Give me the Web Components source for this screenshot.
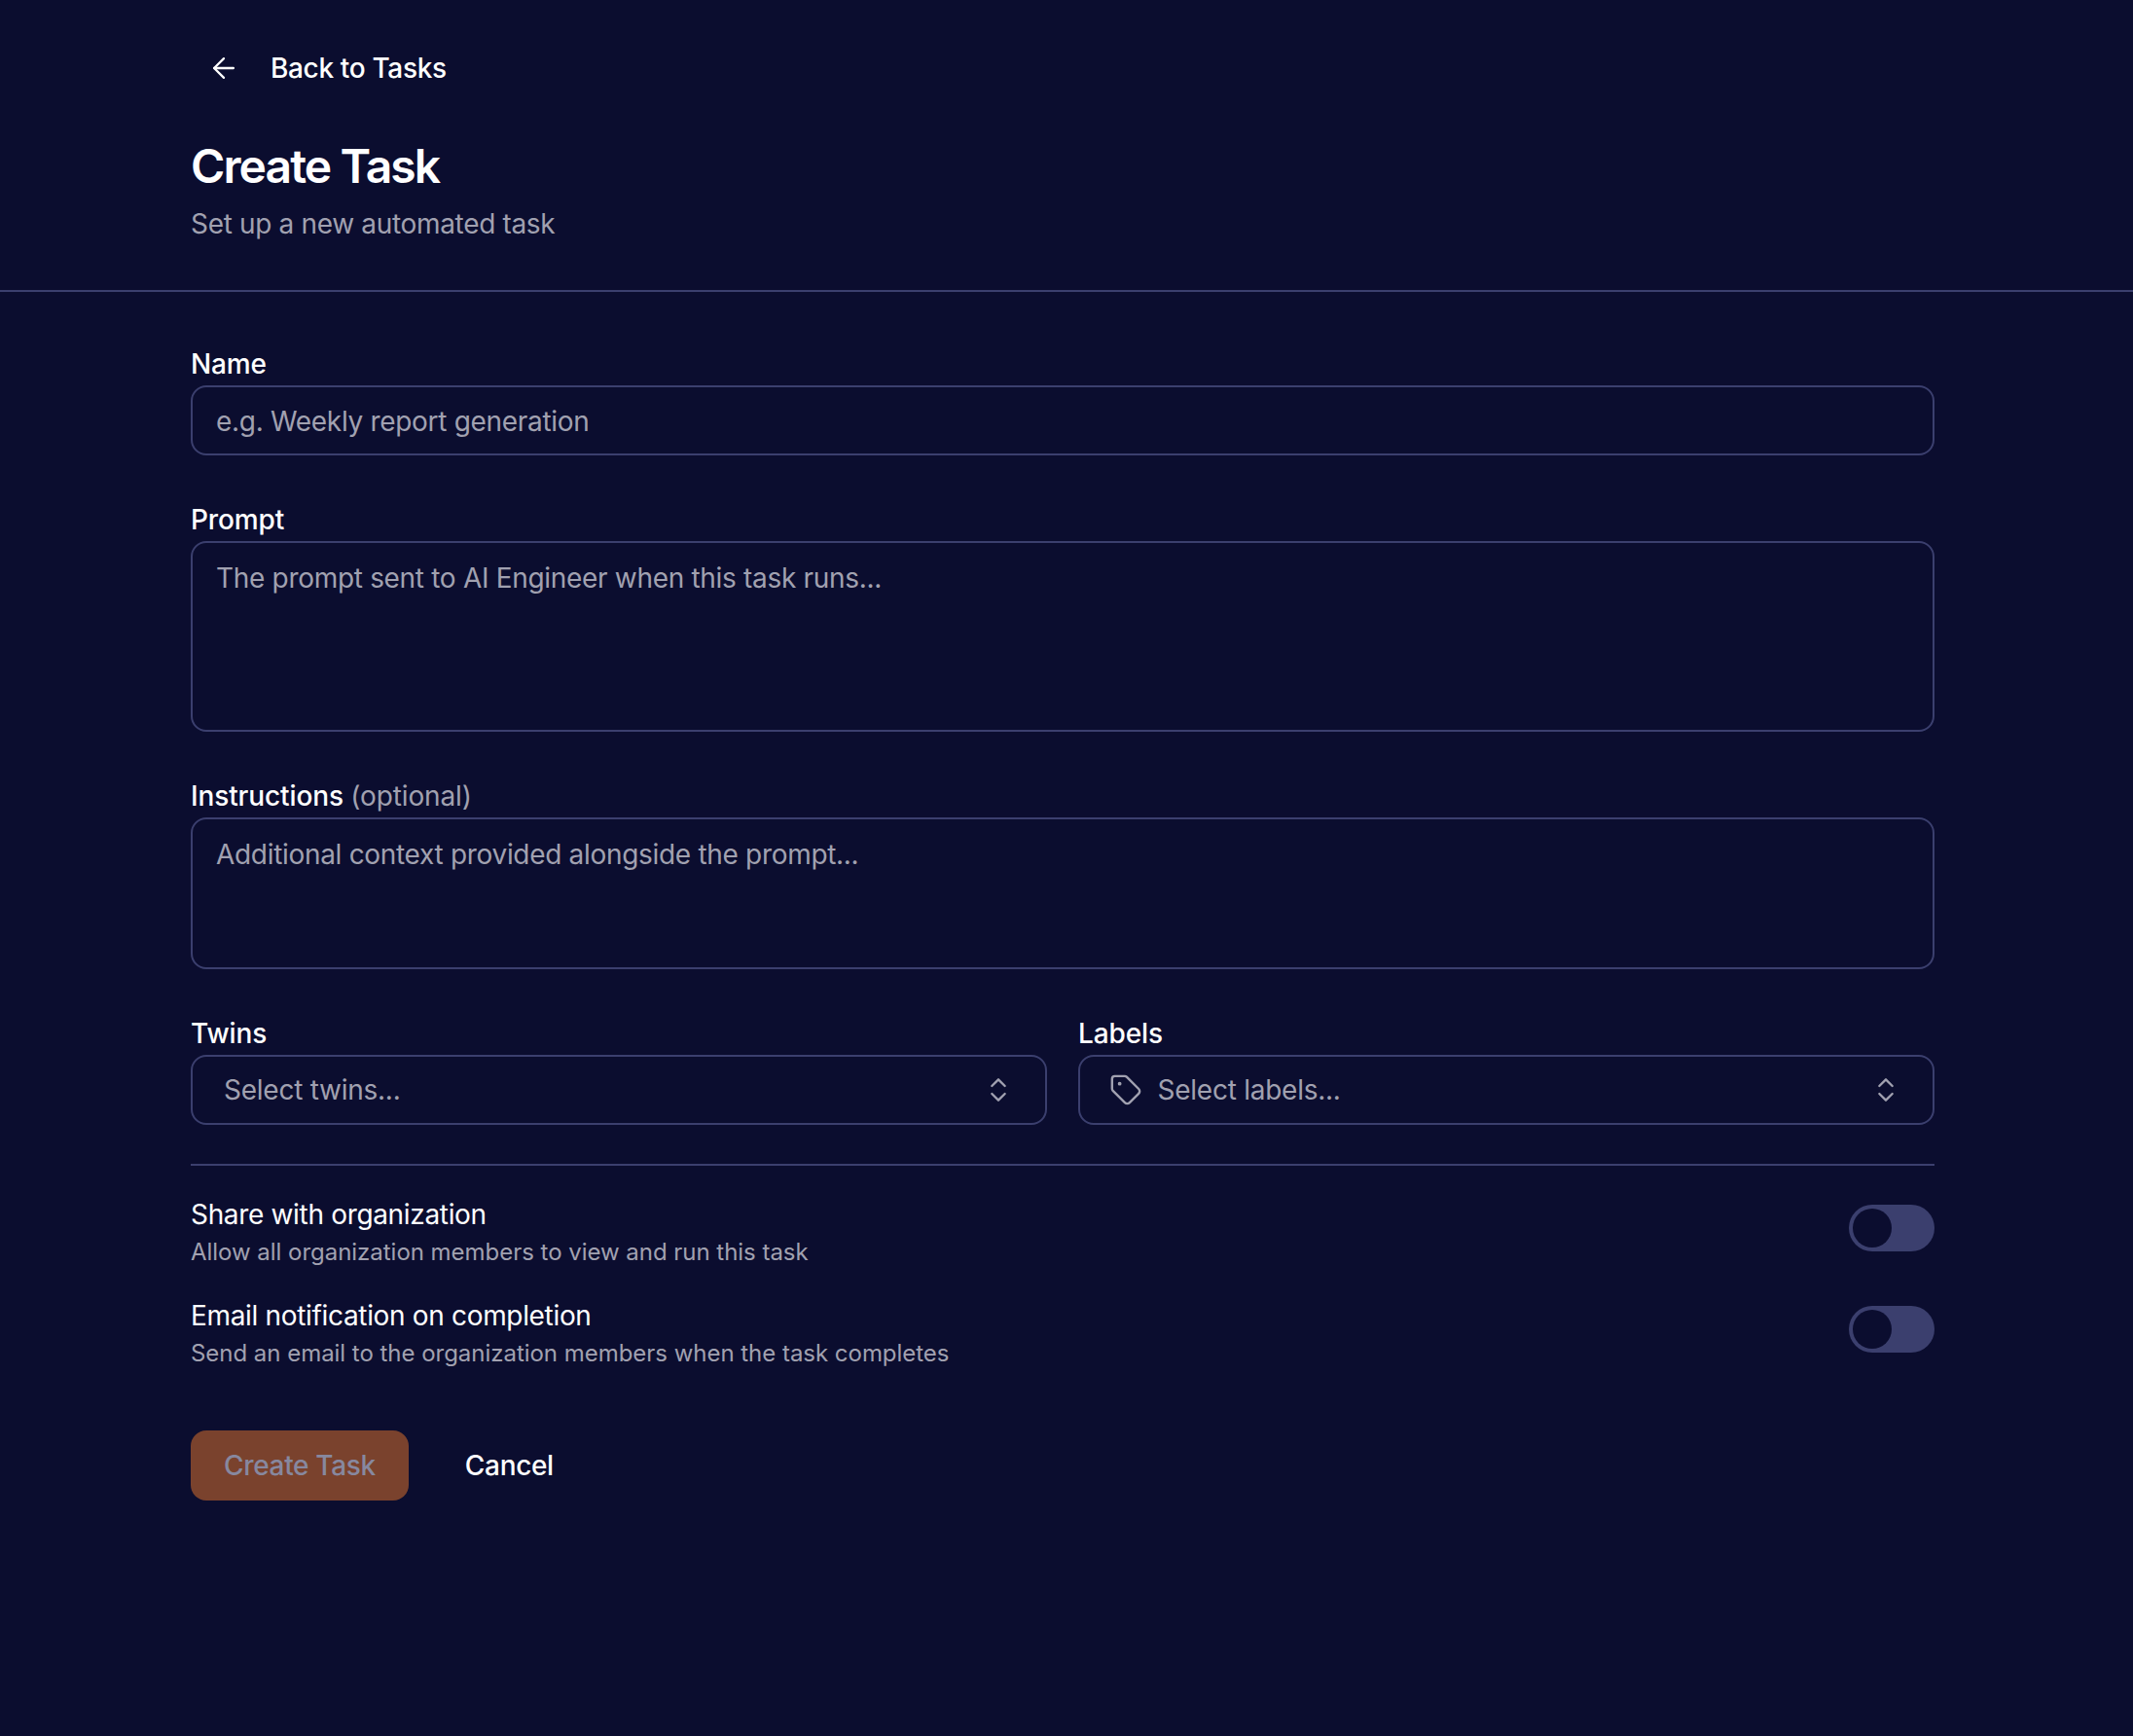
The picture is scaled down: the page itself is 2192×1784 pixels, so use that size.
<!DOCTYPE html>
<html lang="en">
<head>
<meta charset="utf-8">
<title>Create Task</title>
<style>
    html, body { margin: 0; padding: 0; background: #0b0d2f; }
    body { min-height: 1784px; font-family: "Inter", "Liberation Sans", sans-serif; color: #fff; }
</style>
</head>
<body>
<task-page>
    <page-header slot="header" heading="Create Task" sub="Set up a new automated task"></page-header>
    <form-field label="Name"><text-box placeholder="e.g. Weekly report generation"></text-box></form-field>
    <form-field label="Prompt"><text-box rows="196" placeholder="The prompt sent to AI Engineer when this task runs..."></text-box></form-field>
    <form-field label="Instructions" hint="(optional)"><text-box rows="156" placeholder="Additional context provided alongside the prompt..."></text-box></form-field>
    <field-pair>
        <form-field label="Twins"><select-box placeholder="Select twins..."></select-box></form-field>
        <form-field label="Labels"><select-box tag placeholder="Select labels..."></select-box></form-field>
    </field-pair>
    <toggle-list>
        <toggle-row title="Share with organization" desc="Allow all organization members to view and run this task"></toggle-row>
        <toggle-row title="Email notification on completion" desc="Send an email to the organization members when the task completes"></toggle-row>
    </toggle-list>
    <form-actions></form-actions>
</task-page>

<script>
    class TaskPage extends HTMLElement {
        constructor() {
            super();
            this.shadowDOM = this.attachShadow({ mode: "open" });
        }

        connectedCallback() {
            this.shadowDOM.innerHTML = `
            <style>
                :host {
                    display: block;
                    min-height: 1784px;
                    background: #0b0d2f;
                }
                main {
                    display: flex;
                    flex-direction: column;
                    gap: 46px;
                    width: 1792px;
                    margin-left: 196px;
                    padding-top: 54px;
                }
            </style>
            <slot name="header"></slot>
            <main><slot></slot></main>`;
        }
    }

    class PageHeader extends HTMLElement {
        constructor() {
            super();
            this.shadowDOM = this.attachShadow({ mode: "open" });
        }

        connectedCallback() {
            this.shadowDOM.innerHTML = `
            <style>
                :host {
                    display: block;
                    border-bottom: 2px solid #3b3f6e;
                    padding: 34px 0 48px 196px;
                }
                .back {
                    display: flex;
                    align-items: center;
                    gap: 31px;
                    height: 72px;
                    padding-left: 17px;
                    font-size: 28px;
                    font-weight: 500;
                    line-height: 40px;
                    letter-spacing: -0.34px;
                }
                svg { width: 34px; height: 34px; display: block; }
                h1 {
                    margin: 33px 0 0;
                    font-size: 48px;
                    line-height: 64px;
                    font-weight: 600;
                    letter-spacing: -1.9px;
                }
                p {
                    margin: 7px 0 0;
                    font-size: 28px;
                    line-height: 40px;
                    letter-spacing: -0.33px;
                    color: #a1a1b0;
                }
            </style>
            <div class="back">
                <svg viewBox="0 0 24 24" fill="none" stroke="#fff" stroke-width="1.6" stroke-linecap="round" stroke-linejoin="round"><path d="m12 19-7-7 7-7"/><path d="M19 12H5"/></svg>
                <span>Back to Tasks</span>
            </div>
            <h1>${this.getAttribute("heading")}</h1>
            <p>${this.getAttribute("sub")}</p>`;
        }
    }

    class FormField extends HTMLElement {
        constructor() {
            super();
            this.shadowDOM = this.attachShadow({ mode: "open" });
        }

        connectedCallback() {
            const hint = this.getAttribute("hint");
            this.shadowDOM.innerHTML = `
            <style>
                :host { display: block; min-width: 0; }
                .label {
                    margin-bottom: 2px;
                    font-size: 28px;
                    line-height: 40px;
                    font-weight: 500;
                    letter-spacing: -0.12px;
                    color: #fff;
                }
                .hint { font-weight: 400; color: #a1a1b0; }
            </style>
            <div class="label">${this.getAttribute("label")}${hint ? ` <span class="hint">${hint}</span>` : ""}</div>
            <slot></slot>`;
        }
    }

    class TextBox extends HTMLElement {
        constructor() {
            super();
            this.shadowDOM = this.attachShadow({ mode: "open" });
        }

        connectedCallback() {
            const tall = this.getAttribute("rows");
            this.shadowDOM.innerHTML = `
            <style>
                :host {
                    display: block;
                    box-sizing: border-box;
                    height: ${tall ? tall : 72}px;
                    border: 2px solid #3b3f6e;
                    border-radius: 16px;
                    padding: ${tall ? 16 : 15}px 24px;
                    font-size: 28px;
                    line-height: 40px;
                    letter-spacing: -0.31px;
                    color: #a1a1b0;
                }
            </style>
            ${this.getAttribute("placeholder")}`;
        }
    }

    class SelectBox extends HTMLElement {
        constructor() {
            super();
            this.shadowDOM = this.attachShadow({ mode: "open" });
        }

        connectedCallback() {
            const tag = this.hasAttribute("tag") ? `
                <svg class="tag" viewBox="0 0 24 24" fill="none" stroke="#a1a1b0" stroke-width="1.7" stroke-linecap="round" stroke-linejoin="round"><path d="M12.586 2.586A2 2 0 0 0 11.172 2H4a2 2 0 0 0-2 2v7.172a2 2 0 0 0 .586 1.414l8.704 8.704a2.426 2.426 0 0 0 3.42 0l6.58-6.58a2.426 2.426 0 0 0 0-3.42z"/><circle cx="7.5" cy="7.5" r=".5" fill="#a1a1b0"/></svg>` : "";
            this.shadowDOM.innerHTML = `
            <style>
                :host {
                    display: flex;
                    align-items: center;
                    box-sizing: border-box;
                    height: 72px;
                    border: 2px solid #3b3f6e;
                    border-radius: 16px;
                    padding: 0 32px;
                    font-size: 28px;
                    line-height: 40px;
                    letter-spacing: -0.25px;
                    color: #a1a1b0;
                }
                span { flex: 1; }
                svg { display: block; width: 32px; height: 32px; flex: none; }
                .tag { width: 34px; height: 34px; margin: 0 15.5px 0 -2px; }
            </style>
            ${tag}
            <span>${this.getAttribute("placeholder")}</span>
            <svg viewBox="0 0 24 24" fill="none" stroke="#a1a1b0" stroke-width="1.75" stroke-linecap="round" stroke-linejoin="round"><path d="m7 15 5 5 5-5"/><path d="m7 9 5-5 5 5"/></svg>`;
        }
    }

    class FieldPair extends HTMLElement {
        constructor() {
            super();
            this.shadowDOM = this.attachShadow({ mode: "open" });
        }

        connectedCallback() {
            this.shadowDOM.innerHTML = `
            <style>
                :host {
                    display: grid;
                    grid-template-columns: 1fr 1fr;
                    gap: 32px;
                }
            </style>
            <slot></slot>`;
        }
    }

    class ToggleList extends HTMLElement {
        constructor() {
            super();
            this.shadowDOM = this.attachShadow({ mode: "open" });
        }

        connectedCallback() {
            this.shadowDOM.innerHTML = `
            <style>
                :host {
                    display: flex;
                    flex-direction: column;
                    gap: 27px;
                    border-top: 2px solid #3b3f6e;
                    margin-top: -6px;
                    padding-top: 30px;
                }
            </style>
            <slot></slot>`;
        }
    }

    class ToggleRow extends HTMLElement {
        constructor() {
            super();
            this.shadowDOM = this.attachShadow({ mode: "open" });
        }

        connectedCallback() {
            this.shadowDOM.innerHTML = `
            <style>
                :host {
                    display: flex;
                    justify-content: space-between;
                    align-items: flex-start;
                }
                .title { font-size: 28px; line-height: 40px; font-weight: 400; letter-spacing: -0.33px; color: #fff; }
                .desc { margin-top: 1px; font-size: 24px; line-height: 36px; letter-spacing: -0.03px; color: #a1a1b0; }
                .switch {
                    box-sizing: border-box;
                    width: 88px;
                    height: 48px;
                    margin-top: 10px;
                    padding: 4px;
                    border-radius: 24px;
                    background: #3b3f6e;
                }
                .switch i {
                    display: block;
                    width: 40px;
                    height: 40px;
                    border-radius: 50%;
                    background: #0b0d2f;
                }
            </style>
            <div>
                <div class="title">${this.getAttribute("title")}</div>
                <div class="desc">${this.getAttribute("desc")}</div>
            </div>
            <div class="switch"><i></i></div>`;
        }
    }

    class FormActions extends HTMLElement {
        constructor() {
            super();
            this.shadowDOM = this.attachShadow({ mode: "open" });
        }

        connectedCallback() {
            this.shadowDOM.innerHTML = `
            <style>
                :host {
                    display: flex;
                    align-items: center;
                    gap: 24px;
                    margin-top: 15px;
                    font-size: 28px;
                    line-height: 40px;
                    font-weight: 500;
                    letter-spacing: -0.33px;
                }
                .primary {
                    height: 72px;
                    display: flex;
                    align-items: center;
                    padding: 0 34px;
                    border-radius: 16px;
                    background: #7a422d;
                    color: #87889f;
                }
                .ghost { padding: 0 34px; color: #fff; }
            </style>
            <div class="primary">Create Task</div>
            <div class="ghost">Cancel</div>`;
        }
    }

    customElements.define("task-page", TaskPage);
    customElements.define("page-header", PageHeader);
    customElements.define("form-field", FormField);
    customElements.define("text-box", TextBox);
    customElements.define("select-box", SelectBox);
    customElements.define("field-pair", FieldPair);
    customElements.define("toggle-list", ToggleList);
    customElements.define("toggle-row", ToggleRow);
    customElements.define("form-actions", FormActions);
</script>
</body>
</html>
